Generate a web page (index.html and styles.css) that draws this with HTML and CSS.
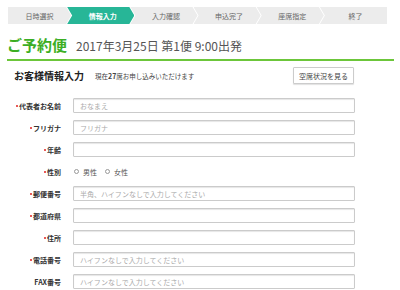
FILE: index.html
```html
<!DOCTYPE html>
<html lang="ja">
<head>
  <meta charset="UTF-8" />
  <title>ご予約便 - お客様情報入力</title>
  <link rel="stylesheet" href="styles.css">
</head>
<body>
  <ol class="steps">
    <li class="step first">日時選択</li>
    <li class="step active">情報入力</li>
    <li class="step">入力確認</li>
    <li class="step">申込完了</li>
    <li class="step">座席指定</li>
    <li class="step last">終了</li>
  </ol>

  <div class="heading">
    <h1 class="title">ご予約便</h1>
    <span class="flight">2017年3月25日 第1便 9:00出発</span>
  </div>

  <div class="section">
    <div class="section-head">
      <h2 class="section-title">お客様情報入力</h2>
      <span class="seats">現在<b>27</b>席お申し込みいただけます</span>
      <button class="btn">空席状況を見る</button>
    </div>

    <form class="form">
      <label class="label req">代表者お名前</label>
      <input class="field" type="text" placeholder="おなまえ">

      <label class="label req">フリガナ</label>
      <input class="field" type="text" placeholder="フリガナ">

      <label class="label req">年齢</label>
      <input class="field" type="text">

      <label class="label req">性別</label>
      <div class="radios">
        <span class="radio"><i></i>男性</span>
        <span class="radio"><i></i>女性</span>
      </div>

      <label class="label req">郵便番号</label>
      <input class="field" type="text" placeholder="半角、ハイフンなしで入力してください">

      <label class="label req">都道府県</label>
      <input class="field" type="text">

      <label class="label req">住所</label>
      <input class="field" type="text">

      <label class="label req">電話番号</label>
      <input class="field" type="text" placeholder="ハイフンなしで入力してください">

      <label class="label">FAX番号</label>
      <input class="field" type="text" placeholder="ハイフンなしで入力してください">
    </form>
  </div>
</body>
</html>
```

FILE: styles.css
```css
body {
  margin: 0;
  background: #fff;
  font-family: "Noto Sans CJK JP", "Noto Sans", sans-serif;
  color: #333;
}

.steps {
  display: flex;
  list-style: none;
  margin: 7px 13px 0 8px;
  padding: 0;
  height: 17px;
}

.step {
  flex: 1;
  display: flex;
  align-items: center;
  justify-content: center;
  margin-right: -4px;
  padding-left: 4px;
  background: #ececec;
  color: #666;
  font-size: 7px;
  clip-path: polygon(0 0, calc(100% - 5px) 0, 100% 50%, calc(100% - 5px) 100%, 0 100%, 5px 50%);
}

.step.first {
  padding-left: 0;
  clip-path: polygon(0 0, calc(100% - 5px) 0, 100% 50%, calc(100% - 5px) 100%, 0 100%);
}

.step.last {
  margin-right: 0;
  clip-path: polygon(0 0, 100% 0, 100% 100%, 0 100%, 5px 50%);
}

.step.active {
  background: #27b697;
  color: #fff;
  font-weight: bold;
}

.heading {
  display: flex;
  align-items: baseline;
  gap: 9px;
  margin: 9px 6px 0 7px;
  padding-bottom: 2px;
  border-bottom: 2px solid #6cc63a;
}

.title {
  margin: 0;
  font-size: 15px;
  font-weight: bold;
  color: #3cae24;
  line-height: 24px;
}

.flight {
  font-size: 12px;
  color: #555;
}

.section {
  padding: 0 8px;
}

.section-head {
  display: flex;
  align-items: center;
  margin-top: 6px;
  height: 17px;
}

.section-title {
  margin: 0 0 0 6px;
  font-size: 10px;
  font-weight: bold;
  color: #222;
}

.seats {
  margin-left: 11px;
  font-size: 6.5px;
  color: #444;
}

.seats b {
  font-size: 7px;
}

.btn {
  margin-left: auto;
  margin-right: 38px;
  width: 61px;
  height: 17px;
  padding: 0;
  border: 1px solid #ccc;
  border-radius: 1px;
  background: #fff;
  box-shadow: 0 1px 1px rgba(0, 0, 0, 0.12);
  font-family: inherit;
  font-size: 7px;
  color: #444;
}

.form {
  display: grid;
  grid-template-columns: 53px 282px;
  grid-auto-rows: 15px;
  column-gap: 12px;
  row-gap: 7px;
  margin-top: 14px;
}

.label {
  display: flex;
  align-items: center;
  justify-content: flex-end;
  font-size: 7px;
  font-weight: bold;
  color: #333;
  white-space: nowrap;
}

.label.req::before {
  content: "";
  width: 2px;
  height: 2px;
  margin-right: 1px;
  border-radius: 50%;
  background: #e02020;
}

.field {
  box-sizing: border-box;
  height: 15px;
  margin: 0;
  padding: 0 6px;
  border: 1px solid #cbcbcb;
  border-radius: 1px;
  box-shadow: inset 0 1px 1px rgba(0, 0, 0, 0.1);
  font-family: inherit;
  font-size: 7px;
  color: #333;
  outline: none;
}

.field::placeholder {
  color: #aaa;
}

.radios {
  display: flex;
  align-items: center;
  gap: 8px;
  padding-left: 1px;
}

.radio {
  display: flex;
  align-items: center;
  gap: 4px;
  font-size: 7px;
  color: #555;
}

.radio i {
  box-sizing: border-box;
  width: 5px;
  height: 5px;
  border: 1px solid #999;
  border-radius: 50%;
}
```
